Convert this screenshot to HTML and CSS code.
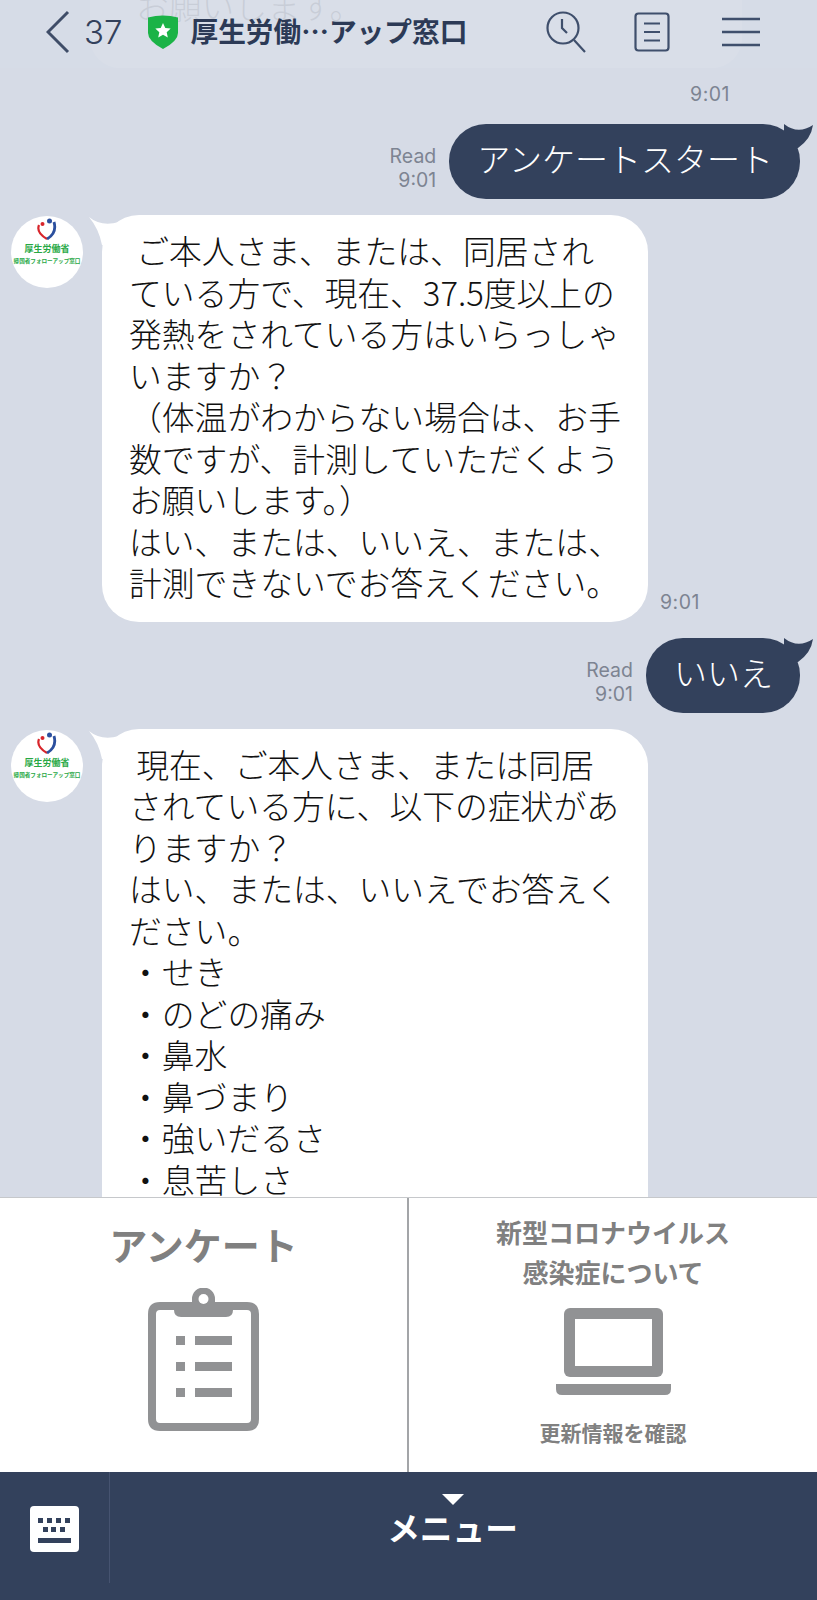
FILE: index.html
```html
<!DOCTYPE html>
<html lang="ja">
<head>
  <meta charset="UTF-8">
  <title>厚生労働省 帰国者フォローアップ窓口</title>
  <link rel="stylesheet" href="styles.css">
</head>
<body>
  <div class="page">
    <header class="topbar">
      <svg class="back" width="24" height="44" viewBox="0 0 24 44"><path d="M22 2 2 22l20 20" fill="none" stroke="#3f4d68" stroke-width="3"/></svg>
      <span class="count">37</span>
      <svg class="shield" width="30" height="34" viewBox="0 0 30 34"><path d="M0 2.500Q15-1.500 30 2.500V18Q30 26 15 34 0 26 0 18Z" fill="#1bb347"/><path d="m15 8 2.300 5 5.400.6-4 3.600 1.100 5.300-4.800-2.700-4.800 2.700 1.100-5.300-4-3.600 5.400-.6Z" fill="#fff"/></svg>
      <span class="title">厚生労働…アップ窓口</span>
      <div class="tools">
        <svg width="40" height="42" viewBox="0 0 40 42" fill="none" stroke="#3f4f6c" stroke-width="2.200"><circle cx="17" cy="17" r="15.500"/><path d="M16 8v9l5 5M28 29l11 12"/></svg>
        <svg width="36" height="40" viewBox="0 0 36 40" fill="none" stroke="#3f4f6c" stroke-width="2.200"><rect x="1.500" y="1.500" width="33" height="37" rx="3"/><path d="M10 11.500h16M10 20h16M10 28.500h16"/></svg>
        <svg width="38" height="30" viewBox="0 0 38 30" fill="none" stroke="#3f4f6c" stroke-width="2.400"><path d="M0 2h38M0 15h38M0 28h38"/></svg>
      </div>
    </header>

    <main class="chat">
      <div class="bubble-hidden">お願いします。</div>
      <div class="time-only">9:01</div>

      <div class="row-me">
        <div class="read">Read<br>9:01</div>
        <div class="bubble-me">アンケートスタート
          <svg class="tail-me" width="30" height="30" viewBox="0 0 30 30"><path d="M0 0Q14 11 29 1 27 15 14 24H0Z" fill="#33415c"/></svg>
        </div>
      </div>

      <div class="row-them">
        <div class="avatar">
          <svg width="20" height="22" viewBox="0 0 20 22"><path d="M10 21C3 17 0 12 2 7" fill="none" stroke="#d8252b" stroke-width="2.200"/><path d="M10 21c7-4 9-10 7-17" fill="none" stroke="#2b4f9e" stroke-width="2.800"/><circle cx="5.500" cy="6" r="2" fill="#d8252b"/><circle cx="12.500" cy="3" r="2.500" fill="#2b4f9e"/></svg>
          <span class="avatar-name">厚生労働省</span>
          <span class="avatar-sub">帰国者フォローアップ窓口</span>
        </div>
        <div class="bubble-them">
          <svg class="tail-them" width="30" height="30" viewBox="0 0 30 30"><path d="M0 2Q12 12 30 7V30H13Q10 14 0 2Z" fill="#fff"/></svg>
          &nbsp;ご本人さま、または、同居され<br>ている方で、現在、37.5度以上の<br>発熱をされている方はいらっしゃ<br>いますか？<br>（体温がわからない場合は、お手<br>数ですが、計測していただくよう<br>お願いします。）<br>はい、または、いいえ、または、<br>計測できないでお答えください。
        </div>
        <div class="time-side">9:01</div>
      </div>

      <div class="row-me">
        <div class="read">Read<br>9:01</div>
        <div class="bubble-me">いいえ
          <svg class="tail-me" width="30" height="30" viewBox="0 0 30 30"><path d="M0 0Q14 11 29 1 27 15 14 24H0Z" fill="#33415c"/></svg>
        </div>
      </div>

      <div class="row-them">
        <div class="avatar">
          <svg width="20" height="22" viewBox="0 0 20 22"><path d="M10 21C3 17 0 12 2 7" fill="none" stroke="#d8252b" stroke-width="2.200"/><path d="M10 21c7-4 9-10 7-17" fill="none" stroke="#2b4f9e" stroke-width="2.800"/><circle cx="5.500" cy="6" r="2" fill="#d8252b"/><circle cx="12.500" cy="3" r="2.500" fill="#2b4f9e"/></svg>
          <span class="avatar-name">厚生労働省</span>
          <span class="avatar-sub">帰国者フォローアップ窓口</span>
        </div>
        <div class="bubble-them bubble-long">
          <svg class="tail-them" width="30" height="30" viewBox="0 0 30 30"><path d="M0 2Q12 12 30 7V30H13Q10 14 0 2Z" fill="#fff"/></svg>
          &nbsp;現在、ご本人さま、または同居<br>されている方に、以下の症状があ<br>りますか？<br>はい、または、いいえでお答えく<br>ださい。<br>・せき<br>・のどの痛み<br>・鼻水<br>・鼻づまり<br>・強いだるさ<br>・息苦しさ
        </div>
      </div>
    </main>

    <section class="richmenu">
      <div class="cell">
        <div class="cell-big">アンケート</div>
        <svg class="clip" width="111" height="143" viewBox="0 0 111 143">
          <path d="M27 18H12Q4 18 4 26V131Q4 139 12 139H99Q107 139 107 131V26Q107 18 99 18H84" fill="none" stroke="#919294" stroke-width="8"/>
          <path d="M26 14H44V11A11.500 11.500 0 0 1 67 11V14H85V22Q85 29 78 29H33Q26 29 26 22Z" fill="#919294"/>
          <circle cx="55.500" cy="11" r="5" fill="#fff"/>
          <path d="M28 48h9v9h-9zM47 48h37v9H47zM28 74h9v9h-9zM47 74h37v9H47zM28 100h9v9h-9zM47 100h37v9H47z" fill="#919294"/>
        </svg>
      </div>
      <div class="cell cell-right">
        <div class="cell-mid">新型コロナウイルス<br>感染症について</div>
        <svg class="laptop" width="115" height="87" viewBox="0 0 115 87">
          <rect x="8" width="99" height="69" rx="6" fill="#919294"/>
          <rect x="19" y="11" width="77" height="47" fill="#fff"/>
          <path d="M0 76h115v5q0 6-6 6H6q-6 0-6-6Z" fill="#919294"/>
        </svg>
        <div class="cell-small">更新情報を確認</div>
      </div>
    </section>

    <footer class="menubar">
      <div class="kbd-cell">
        <svg width="49" height="46" viewBox="0 0 49 46">
          <rect width="49" height="46" rx="4" fill="#fff"/>
          <path d="M8 12h5v5H8zM17 12h5v5h-5zM26 12h5v5h-5zM35 12h5v5h-5zM13 21h5v5h-5zM21 21h5v5h-5zM30 21h5v5h-5zM8 32h33v5H8z" fill="#33415c"/>
        </svg>
      </div>
      <div class="menu-toggle">
        <div class="arrow"></div>
        <div class="menu-label">メニュー</div>
      </div>
    </footer>
  </div>
</body>
</html>
```

FILE: styles.css
```css
* { box-sizing: border-box; }
html, body { margin: 0; padding: 0; }
body { font-family: "Noto Sans CJK JP", "Noto Sans", sans-serif; background: #d6dbe6; color: #111; }

.page { width: 817px; height: 1600px; display: flex; flex-direction: column; position: relative; overflow: hidden; }

/* top bar lies over the chat, the chat shows through it */
.topbar { position: absolute; top: 0; left: 0; right: 0; height: 68px; z-index: 2; display: flex; align-items: center; padding: 0 0 4px 46px; background: rgba(214,219,230,0.93); }
.count { margin-left: 14px; font-family: Inter, sans-serif; font-size: 33px; font-weight: 300; color: #33415c; }
.shield { margin-left: 26px; }
.title { margin: -4px 0 0 12px; font-size: 27.700px; font-weight: 700; color: #2c3a56; white-space: nowrap; }
.tools { margin-left: auto; display: flex; align-items: center; gap: 48px; padding-right: 57px; }
.tools svg:last-child { margin-left: 4px; }

.chat { flex: 1; min-height: 0; overflow: hidden; display: flex; flex-direction: column; }

.bubble-hidden { margin: -16px 0 0 90px; width: 652px; height: 84px; flex: none; padding-left: 46px; background: #fff; border-radius: 0 0 30px 30px; font-size: 32.800px; font-weight: 300; line-height: 41.500px; }
.time-only { flex: none; margin-top: 14px; height: 24px; padding-right: 87px; text-align: right; font-family: Inter, sans-serif; font-size: 19.500px; line-height: 24px; letter-spacing: .5px; color: #7d8492; }

.row-me { flex: none; display: flex; justify-content: flex-end; align-items: flex-end; gap: 13px; padding-right: 17px; margin-bottom: 16px; }
.time-only + .row-me { margin-top: 18px; }
.read { font-family: Inter, sans-serif; font-size: 19.500px; line-height: 24px; text-align: right; color: #7d8492; padding-bottom: 7px; }
.bubble-me { position: relative; height: 75px; padding: 0 27px 0 28px; border-radius: 37px; background: #33415c; color: #fff; font-size: 33px; font-weight: 300; line-height: 69px; white-space: nowrap; }
.tail-me { position: absolute; top: 0; right: -14px; }

.row-them { flex: none; display: flex; align-items: flex-end; margin-bottom: 16px; padding-left: 11px; position: relative; }
.avatar { position: absolute; top: 1px; left: 11px; width: 72px; height: 72px; border-radius: 50%; background: #fff; display: flex; flex-direction: column; align-items: center; padding-top: 2px; }
.avatar-name { font-size: 9px; line-height: 12px; font-weight: 700; color: #27a844; margin-top: 3px; white-space: nowrap; }
.avatar-sub { font-size: 5.600px; line-height: 12px; font-weight: 700; color: #27a844; white-space: nowrap; }
.bubble-them { position: relative; margin-left: 91px; width: 546px; padding: 14px 10px 19px 27px; border-radius: 37px; background: #fff; font-size: 32.800px; font-weight: 300; line-height: 41.500px; white-space: nowrap; }
.bubble-long { padding-bottom: 80px; }
.tail-them { position: absolute; top: 0; left: -13px; }
.time-side { margin-left: 12px; font-family: Inter, sans-serif; font-size: 19.500px; line-height: 24px; letter-spacing: .5px; color: #7d8492; padding-bottom: 8px; }

.richmenu { flex: none; height: 275px; display: grid; grid-template-columns: 407px 1fr; background: #fff; border-top: 1px solid #c6c8cb; }
.cell { display: flex; flex-direction: column; align-items: center; padding-top: 19px; overflow: hidden; }
.cell-right { border-left: 2px solid #a3a5a8; padding-top: 14px; }
.cell-big { font-size: 38px; line-height: 54px; font-weight: 700; color: #808080; }
.clip { margin-top: 17px; }
.cell-mid { font-size: 26px; line-height: 40px; font-weight: 700; color: #808080; text-align: center; }
.laptop { margin-top: 16px; }
.cell-small { margin-top: 22px; font-size: 21px; line-height: 30px; font-weight: 700; color: #808080; }

.menubar { flex: none; height: 128px; display: flex; background: #33415c; }
.kbd-cell { width: 110px; height: 111px; display: flex; justify-content: center; padding: 34px 0 0 0; border-right: 1px solid #465370; }
.kbd-cell svg { margin-left: -1px; }
.menu-toggle { flex: 1; display: flex; flex-direction: column; align-items: center; padding: 22px 22px 0 0; }
.arrow { width: 0; height: 0; border-left: 11px solid transparent; border-right: 11px solid transparent; border-top: 11px solid #fff; }
.menu-label { font-size: 32.700px; line-height: 48px; font-weight: 700; color: #fff; margin-top: -2px; }
```
